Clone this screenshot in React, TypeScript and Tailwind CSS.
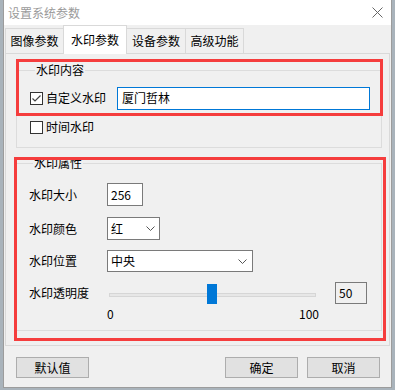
import React from 'react';

const Chevron = () => (
  <svg width="9" height="5" viewBox="0 0 9 5" fill="none">
    <path d="M0.5 0.5L4.5 4.5L8.5 0.5" stroke="#555" strokeWidth="1" />
  </svg>
);

const CheckBox = ({ checked }: { checked?: boolean }) => (
  <div className="w-[13px] h-[13px] border border-[#333] bg-white flex items-center justify-center shrink-0">
    {checked && (
      <svg width="11" height="11" viewBox="0 0 11 11" fill="none">
        <path d="M1.5 5.5L4 8L9.5 2.5" stroke="#444" strokeWidth="1.2" />
      </svg>
    )}
  </div>
);

const tabs = [
  { label: '图像参数', cls: 'w-[58px] h-[25px] border-l border-t' },
  { label: '水印参数', cls: 'w-[64px] h-[29px] border-l border-t border-r bg-white relative z-10 mb-[-1px]', active: true },
  { label: '设备参数', cls: 'w-[58px] h-[25px] border-t' },
  { label: '高级功能', cls: 'w-[59px] h-[25px] border-l border-t border-r' },
];

export default function App() {
  return (
    <div className="w-[395px] h-[390px] bg-[#a9b3bb] relative font-['Noto_Sans_CJK_SC',sans-serif] text-[12px] leading-[16px] text-black overflow-hidden">
      <div className="ml-[3px] w-[389px] h-[388px] bg-[#f0f0f0] border-x border-b border-[#9c9c9c] flex flex-col">
        {/* title bar */}
        <div className="h-[25px] bg-white flex items-center justify-between pl-[4px] pr-[8px] shrink-0">
          <span className="text-[#9a9a9a]">设置系统参数</span>
          <svg width="11" height="11" viewBox="0 0 11 11" fill="none">
            <path d="M0.5 0.5L10.5 10.5M10.5 0.5L0.5 10.5" stroke="#666" strokeWidth="1" />
          </svg>
        </div>

        {/* tabs */}
        <div className="h-[28px] flex items-end pl-[1px] shrink-0">
          {tabs.map((t) => (
            <div
              key={t.label}
              className={`${t.cls} border-[#d9d9d9] flex items-center justify-center ${t.active ? 'pb-[1px]' : ''}`}
            >
              {t.label}
            </div>
          ))}
        </div>

        {/* tab panel */}
        <div className="ml-[1px] w-[385px] h-[293px] border border-[#d9d9d9] bg-[#f0f0f0] shrink-0">
          <fieldset className="ml-[10px] mt-[8px] w-[366px] border border-[#dcdcdc] pl-[13px] pb-[12px]">
            <legend className="ml-[5px] px-[1px] leading-[16px]">水印内容</legend>
            <div className="mt-[9px] h-[22px] flex items-center">
              <CheckBox checked />
              <span className="ml-[3px] w-[71px]">自定义水印</span>
              <div className="w-[253px] h-[23px] border border-[#0078d7] bg-white flex items-center pl-[4px]">
                厦门哲林
              </div>
            </div>
            <div className="mt-[10px] h-[16px] flex items-center">
              <CheckBox />
              <span className="ml-[3px]">时间水印</span>
            </div>
          </fieldset>

          <fieldset className="ml-[10px] mt-[7px] w-[366px] border border-[#dcdcdc] pl-[12px] pb-[10px]">
            <legend className="ml-[4px] px-[1px] leading-[16px]">水印属性</legend>
            <div className="mt-[12px] h-[23px] flex items-center">
              <span className="w-[78px]">水印大小</span>
              <div className="w-[36px] h-[23px] border border-[#7a7a7a] bg-white flex items-center pl-[3px]">256</div>
            </div>
            <div className="mt-[11px] h-[23px] flex items-center">
              <span className="w-[78px]">水印颜色</span>
              <div className="w-[53px] h-[23px] border border-[#7a7a7a] bg-white flex items-center justify-between pl-[3px] pr-[4px]">
                <span>红</span>
                <Chevron />
              </div>
            </div>
            <div className="mt-[10px] h-[22px] flex items-center">
              <span className="w-[78px]">水印位置</span>
              <div className="w-[146px] h-[22px] border border-[#7a7a7a] bg-white flex items-center justify-between pl-[3px] pr-[5px]">
                <span>中央</span>
                <Chevron />
              </div>
            </div>
            <div className="mt-[10px] h-[22px] flex items-center">
              <span className="w-[80px]">水印透明度</span>
              <div className="relative w-[207px] h-[22px]">
                <div className="absolute left-0 top-[11px] w-[207px] h-[4px] border border-[#d6d6d6] bg-[#e7e7e7]" />
                <div className="absolute left-[98px] top-[2px] w-[10px] h-[20px] bg-[#0078d7]" />
              </div>
              <div className="ml-[19px] w-[32px] h-[22px] border border-[#7a7a7a] bg-[#f0f0f0] flex items-center pl-[3px]">50</div>
            </div>
            <div className="mt-[4px] h-[12px] pl-[78px] flex">
              <div className="w-[212px] flex justify-between leading-[12px]">
                <span>0</span>
                <span>100</span>
              </div>
            </div>
          </fieldset>
        </div>

        {/* buttons */}
        <div className="mt-[11px] ml-[12px] flex items-center">
          <button className="w-[73px] h-[21px] bg-[#e1e1e1] border border-[#adadad] flex items-center justify-center">默认值</button>
          <button className="ml-[136px] w-[73px] h-[21px] bg-[#e1e1e1] border border-[#adadad] flex items-center justify-center">确定</button>
          <button className="ml-[9px] w-[73px] h-[21px] bg-[#e1e1e1] border border-[#adadad] flex items-center justify-center">取消</button>
        </div>
      </div>

      {/* red annotation boxes */}
      <div className="absolute left-[16px] top-[59px] w-[367px] h-[57px] border-[3px] border-[#f53d3d] pointer-events-none" />
      <div className="absolute left-[14px] top-[157px] w-[372px] h-[184px] border-[3px] border-[#f53d3d] pointer-events-none" />
    </div>
  );
}
